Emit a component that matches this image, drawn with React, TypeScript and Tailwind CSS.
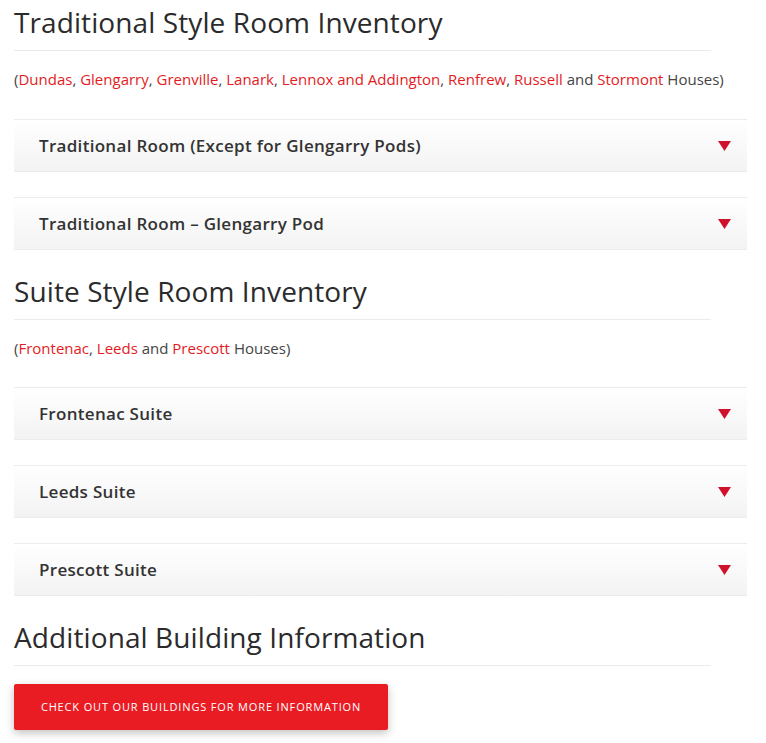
import React from "react";

const R = ({ children }: { children: React.ReactNode }) => (
  <span className="text-[#e31b23]">{children}</span>
);

function Heading({ children }: { children: React.ReactNode }) {
  return (
    <div className="w-[697px] h-[51px] border-b border-[#ebebeb] flex items-center">
      <h2 className="text-[28px] leading-none text-[#2b2b2b] font-normal -mt-[6px] tracking-[0.1px]">{children}</h2>
    </div>
  );
}

function Acc({ title }: { title: string }) {
  return (
    <div className="w-[733px] h-[53px] border-t border-b border-[#ececec] bg-gradient-to-b from-white to-[#f3f3f3] flex items-center justify-between pl-[25px] pr-[16px]">
      <span className="text-[17px] text-[#333] font-[550] tracking-[0.3px]">{title}</span>
      <svg width="13" height="10" viewBox="0 0 13 10">
        <polygon points="0,0 13,0 6.5,10" fill="#d0112b" />
      </svg>
    </div>
  );
}

export default function App() {
  return (
    <div className="bg-white min-h-[743px] pl-[14px] pt-[0px]" style={{ fontFamily: "'Open Sans', sans-serif" }}>
      <Heading>Traditional Style Room Inventory</Heading>
      <p className="text-[15px] text-[#444] mt-[18px] leading-[20px]">
        (<R>Dundas</R>, <R>Glengarry</R>, <R>Grenville</R>, <R>Lanark</R>, <R>Lennox and Addington</R>, <R>Renfrew</R>, <R>Russell</R> and <R>Stormont</R> Houses)
      </p>
      <div className="mt-[30px] flex flex-col gap-[25px]">
        <Acc title="Traditional Room (Except for Glengarry Pods)" />
        <Acc title="Traditional Room – Glengarry Pod" />
      </div>
      <div className="mt-[19px]">
        <Heading>Suite Style Room Inventory</Heading>
      </div>
      <p className="text-[15px] text-[#444] mt-[18px] leading-[20px]">
        (<R>Frontenac</R>, <R>Leeds</R> and <R>Prescott</R> Houses)
      </p>
      <div className="mt-[29px] flex flex-col gap-[25px]">
        <Acc title="Frontenac Suite" />
        <Acc title="Leeds Suite" />
        <Acc title="Prescott Suite" />
      </div>
      <div className="mt-[19px]">
        <Heading>Additional Building Information</Heading>
      </div>
      <button className="mt-[18px] w-[374px] h-[46px] bg-[#e91c24] text-white text-[11px] tracking-[0.85px] uppercase rounded-[2px] shadow-[0_3px_8px_rgba(0,0,0,0.25)] font-medium">
        Check out our buildings for more information
      </button>
    </div>
  );
}
